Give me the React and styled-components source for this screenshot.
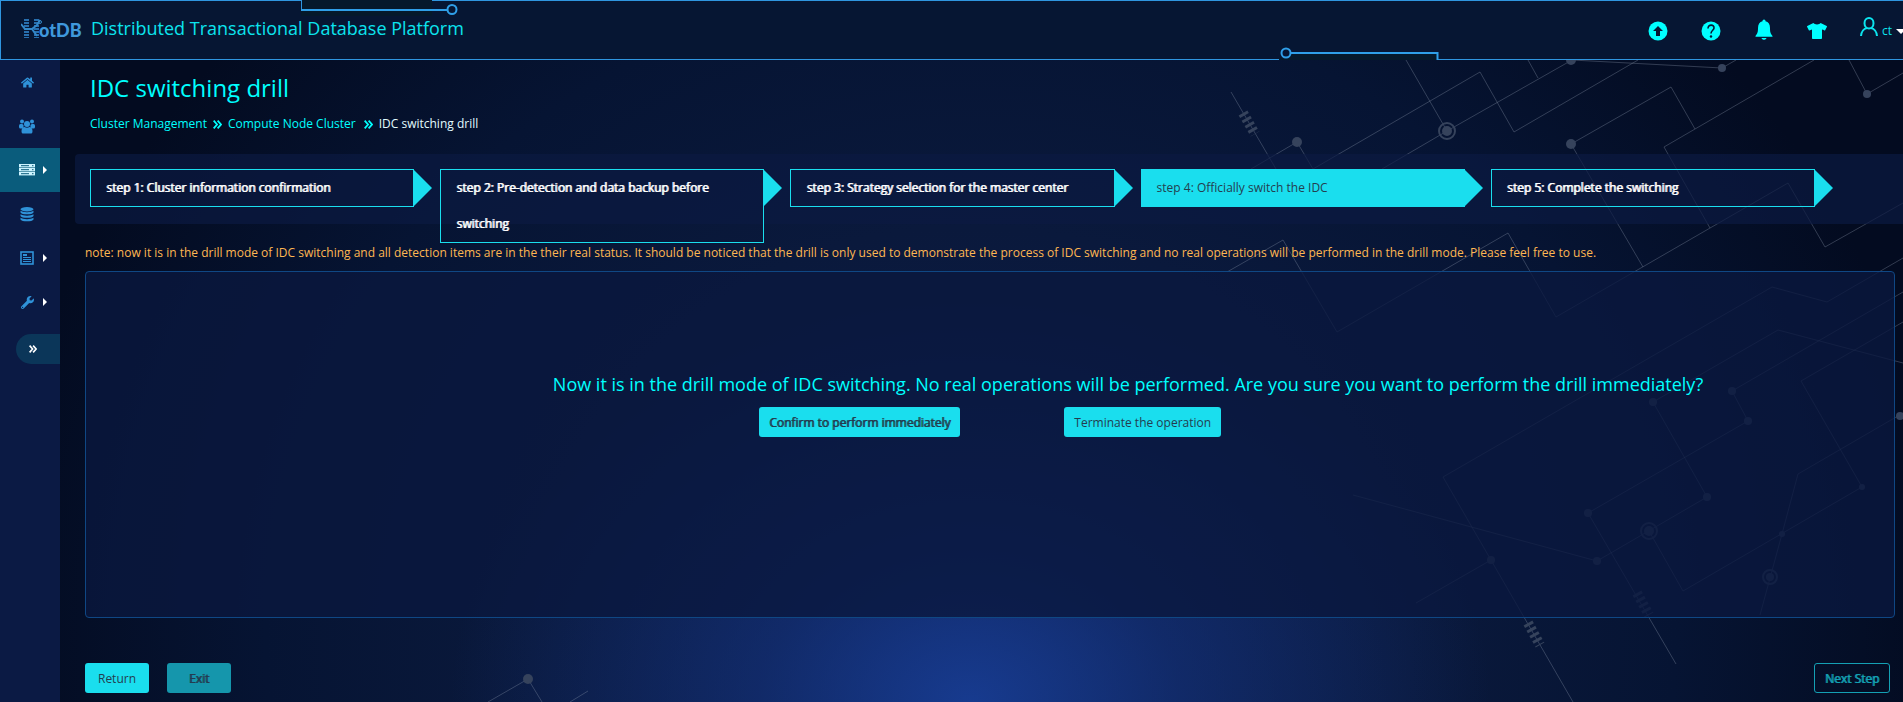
import React from "react";
import styled, { createGlobalStyle, css } from "styled-components";
import { FaTshirt, FaWrench, FaHome } from "react-icons/fa";

const GlobalStyle = createGlobalStyle`
  *, *::before, *::after { box-sizing: border-box; }
  body {
    margin: 0;
    background: #030b20;
    color: #ffffff;
    font-family: "Open Sans", "Noto Sans", sans-serif;
    font-size: 12px;
    line-height: 18px;
  }
  a { text-decoration: none; color: inherit; }
  svg { display: block; }
  h1, p, ol, ul { margin: 0; padding: 0; }
  button { font-family: inherit; cursor: pointer; }
`;

const strongText = css`
  text-shadow: 1px 0 0 currentColor;
`;

const Page = styled.div`
  position: relative;
  display: flex;
  flex-direction: column;
  min-height: 100vh;
  overflow: hidden;
  background:
    radial-gradient(ellipse 520px 400px at 51% 100%, rgba(26, 66, 160, 0.8), rgba(22, 54, 134, 0.55) 40%, rgba(12, 30, 80, 0) 100%),
    radial-gradient(ellipse 980px 900px at 51% 90%, #0c1e4c 0%, #0a193c 45%, #061433 72%, #030b20 100%);
`;

const Circuit = styled.svg`
  position: absolute;
  top: 0;
  right: 0;
  width: 1903px;
  height: 702px;
  fill: none;
  stroke: rgba(142, 152, 174, 0.34);
  stroke-width: 1;

  .node { fill: #36435c; stroke: none; }
  .ring { stroke: #36435c; stroke-width: 2; }
  .coil { stroke: #36435c; stroke-width: 10; stroke-dasharray: 3 3; }
`;

const Header = styled.header`
  position: relative;
  display: flex;
  align-items: center;
  height: 60px;
  padding-left: 20px;
  background: #061633;
  border: 1px solid #2f96e0;
  border-right: 0;
`;

const TopNotch = styled.svg`
  position: absolute;
  top: -1px;
  left: 299px;
`;

const BottomNotch = styled.svg`
  position: absolute;
  bottom: -1px;
  right: 464px;
`;

const Brand = styled.a`
  display: flex;
  align-items: center;
  gap: 9px;
  padding-bottom: 4px;
  color: #0ce4ee;
  font-size: 18px;
  line-height: 26px;
`;

const Tools = styled.nav`
  display: flex;
  align-items: center;
  gap: 33px;
  margin-left: auto;
  padding-top: 2px;
  color: #00ffff;
`;

const Tool = styled.a`
  display: grid;
  place-items: center;
  width: 20px;
  height: 24px;
  padding-bottom: ${(p) => (p.$raised ? 4 : 0)}px;
`;

const Account = styled.a`
  display: flex;
  align-items: center;
  gap: 4px;
  color: #0ce4ee;
`;

const Body = styled.div`
  position: relative;
  display: flex;
  flex: 1;
`;

const Sidebar = styled.nav`
  display: flex;
  flex-direction: column;
  flex: none;
  width: 60px;
  background: #0b1a44;
`;

const SideItem = styled.a`
  display: grid;
  grid-template-columns: 18px 4px;
  align-items: center;
  justify-items: center;
  gap: 7px;
  height: 44px;
  padding-left: 18px;
  color: ${(p) => (p.$active ? "#ccf4ff" : "#2f92d8")};
  background: ${(p) => (p.$active ? "#0a5c7c" : "transparent")};
`;

const Expand = styled.button`
  display: flex;
  align-items: center;
  height: 30px;
  margin: 10px 0 0 16px;
  padding: 0 0 0 13px;
  border: 0;
  border-radius: 15px 0 0 15px;
  background: #0b3659;
  color: #ffffff;
`;

const Main = styled.main`
  flex: 1;
  min-width: 0;
  padding-left: 15px;
`;

const Title = styled.h1`
  padding: 12px 15px 0;
  color: #00ffff;
  font-size: 24px;
  font-weight: 400;
  line-height: 32px;
`;

const Crumbs = styled.nav`
  display: flex;
  align-items: center;
  gap: 6px;
  padding: 11px 15px 21px;
  color: #00ffff;

  svg + a { padding-right: 2px; }
  span { color: #e2fbff; }
`;

const Steps = styled.ol`
  display: grid;
  grid-template-columns: repeat(5, 1fr);
  align-items: start;
  gap: 26px;
  height: 70px;
  padding: 15px 88px 0 15px;
  list-style: none;
  border-radius: 4px 0 0 4px;
  background: rgba(11, 25, 66, 0.7);
`;

const Step = styled.li`
  position: relative;
  padding: 0 40px 0 15px;
  border: 1px solid #1adeee;
  background: ${(p) => (p.$active ? "#1adeee" : "transparent")};
  color: ${(p) => (p.$active ? "#24404f" : "#ffffff")};
  line-height: 36px;
  ${(p) => !p.$active && strongText}

  &::after {
    content: "";
    position: absolute;
    top: -1px;
    left: 100%;
    border-style: solid;
    border-width: 19px 0 19px 19px;
    border-color: transparent transparent transparent #1adeee;
  }
`;

const Note = styled.p`
  padding: 20px 10px 9px;
  color: #ffb752;
`;

const Panel = styled.section`
  min-height: 347px;
  margin: 0 8px 0 10px;
  padding-top: 99px;
  border: 1px solid #0f4784;
  border-radius: 4px;
  background: rgba(10, 24, 62, 0.8);
`;

const Question = styled.p`
  padding-left: 276px;
  color: #00ffff;
  font-size: 18px;
  line-height: 26px;
  text-align: center;
`;

const Choices = styled.div`
  display: flex;
  justify-content: center;
  gap: 104px;
  padding-top: 10px;
`;

const Button = styled.button`
  min-width: 64px;
  height: 30px;
  padding: 1px 9px 0;
  border: 1px solid ${(p) => (p.$kind === "outline" ? "#14a0b4" : "transparent")};
  border-radius: 3px;
  background: ${(p) =>
    p.$kind === "outline" ? "transparent" : p.$kind === "muted" ? "#1596ac" : "#1adeee"};
  color: ${(p) => (p.$kind === "outline" ? "#14a0b4" : "#243c4e")};
  font-size: 12px;
  line-height: 18px;
  ${(p) => p.$bold && strongText}
`;

const Footer = styled.footer`
  display: flex;
  gap: 18px;
  padding: 45px 13px 9px 10px;

  button:last-child {
    min-width: 76px;
    margin-left: auto;
  }
`;

const circuitLines = [
  "1406,60 1447,131",
  "1382,169 1447,131 1572,60 1722,68 1736,60",
  "1528,60 1538,78",
  "1251,169 1297,142 1313,169 1480,72 1514,132 1638,60",
  "1231,92 1276,169",
  "1695,129 1671,87 1571,144 1643,267",
  "1814,60 1664,147 1710,228",
  "1849,60 1867,94 1903,73",
  "1903,203 1825,247 1788,183 1556,317 1508,233 1337,332 1283,240 1227,272",
  "1903,258 1827,302 1772,287 1443,477 1573,702",
  "1491,560 1416,603",
  "1903,292 1732,391 1748,421 1588,513 1676,664",
  "1903,363 1778,330 1653,402 1707,497 1597,561 1353,495",
  "1903,322 1801,381 1862,487 1683,591 1649,531",
  "1903,413 1798,474 1782,534 1760,615",
  "488,702 528,679 542,702",
  "570,702 588,691",
];
const circuitNodes = [
  [1571, 60, 5], [1722, 68, 4], [1867, 94, 4], [1297, 142, 5], [1571, 144, 5], [1447, 131, 5],
  [1653, 402, 4], [1732, 391, 4], [1748, 421, 4], [1588, 513, 4], [1707, 497, 4], [1649, 531, 5],
  [1597, 561, 4], [1782, 534, 3], [1862, 487, 3], [1770, 577, 4], [1491, 560, 4], [1900, 416, 4], [528, 679, 5],
];
const circuitRings = [[1447, 131, 8], [1649, 531, 8], [1770, 577, 7]];
const circuitCoils = ["1243,113 1255,134", "1528,623 1540,645", "1637,593 1649,615"];

const CircuitArt = () => (
  <Circuit viewBox="0 0 1903 702" aria-hidden="true">
    {circuitLines.map((p) => <polyline key={p} points={p} />)}
    {circuitCoils.map((p) => <polyline key={p} points={p} className="coil" />)}
    {circuitRings.map(([x, y, r]) => <circle key={x} cx={x} cy={y} r={r} className="ring" />)}
    {circuitNodes.map(([x, y, r]) => <circle key={`${x}-${y}`} cx={x} cy={y} r={r} className="node" />)}
  </Circuit>
);

const Logo = () => (
  <svg width="61" height="24" viewBox="0 0 61 24" role="img" aria-label="HotDB">
    <path d="M5.500 3v19M15.500 3v19" fill="none" stroke="#286fae" strokeWidth="5" strokeDasharray="2 1" />
    <path d="M0 8l4 5h7l5-4 3-5M11 13l5 7" fill="none" stroke="#3387c8" strokeWidth="2" />
    <circle cx="10.500" cy="7" r="2.500" fill="#061633" />
    <circle cx="19" cy="6" r="1.500" fill="none" stroke="#3387c8" />
    <text x="18" y="21" fill="#3f98dc" fontFamily="Lato, sans-serif" fontWeight="900" fontSize="18">otDB</text>
  </svg>
);

const UpIcon = () => (
  <svg width="20" height="20" viewBox="0 0 20 20">
    <circle cx="10" cy="10" r="9.500" fill="currentColor" />
    <path d="M10 5l5 5h-3v5H8v-5H5z" fill="#061633" />
  </svg>
);

const HelpIcon = () => (
  <svg width="20" height="20" viewBox="0 0 20 20">
    <circle cx="10" cy="10" r="9.500" fill="currentColor" />
    <path d="M7 7.500C7 2.800 13.500 3.200 13 7.200C12.800 9.200 10 9.500 10 12.500" fill="none" stroke="#061633" strokeWidth="1.600" />
    <circle cx="10" cy="15.500" r="1.200" fill="#061633" />
  </svg>
);

const BellIcon = () => (
  <svg width="20" height="24" viewBox="0 0 20 24">
    <path d="M10 0.500c1 0 1.500.7 1.500 1.800C14.500 3 16 5.500 16 9c0 4 .5 5.500 2.500 8v.8h-17V17C3.500 14.500 4 13 4 9c0-3.500 1.500-6 4.500-6.700C8.500 1.200 9 .5 10 .5zM7.500 19h5c-.4 2.400-4.600 2.400-5 0z" fill="currentColor" />
  </svg>
);

const UserIcon = () => (
  <svg width="18" height="28" viewBox="0 0 18 28" fill="none" stroke="currentColor" strokeWidth="2">
    <ellipse cx="9" cy="6.200" rx="4.500" ry="5.200" />
    <path d="M1 19c.3-4.500 3-7.500 6-8M17 19c-.3-4.500-3-7.500-6-8" />
  </svg>
);

const PeopleIcon = () => (
  <svg width="16" height="15" viewBox="0 0 16 15" fill="currentColor">
    <circle cx="3" cy="2.500" r="2" />
    <circle cx="13" cy="2.500" r="2" />
    <rect y="5" width="4.500" height="4.500" rx="1.500" />
    <rect x="11.500" y="5" width="4.500" height="4.500" rx="1.500" />
    <circle cx="8" cy="5" r="3" />
    <path d="M2.500 12c0-2.500 1.500-4 3-4 1.500 1 3.500 1 5 0 1.500 0 3 1.500 3 4 0 2-.5 2.500-2 2.500h-7c-1.500 0-2-.5-2-2.500z" />
  </svg>
);

const ServerIcon = () => (
  <svg width="16" height="12" viewBox="0 0 16 12">
    {[0, 4, 8].map((y) => (
      <g key={y}>
        <rect y={y} width="16" height="3.400" fill="currentColor" />
        <path d={`M2 ${y + 1.7}h8M13 ${y + 1.7}h1.500`} stroke="#0a5c7c" />
      </g>
    ))}
  </svg>
);

const DatabaseIcon = () => (
  <svg width="14" height="15" viewBox="0 0 14 15" fill="currentColor">
    <ellipse cx="7" cy="2.200" rx="6.500" ry="2.200" />
    {[3.8, 7.3, 10.8].map((y) => (
      <path key={y} d={`M.5 ${y}c2 1.900 11 1.900 13 0v1.600c-1 2.500-12 2.500-13 0z`} />
    ))}
  </svg>
);

const ListIcon = () => (
  <svg width="14" height="14" viewBox="0 0 14 14" fill="none" stroke="currentColor">
    <rect x="1" y="1" width="12" height="12" strokeWidth="1.600" />
    <path d="M3 6.500h8M3 8.500h8M3 10.500h8" />
    <path d="M3 4h4" strokeWidth="2" />
  </svg>
);

const Chevrons = ({ size = 8 }) => (
  <svg width={size} height={size} viewBox="0 0 8 8" fill="none" stroke="currentColor" strokeWidth="1.600" aria-hidden="true">
    <path d="M.6.600L3.600 4L.6 7.400M4.100.600L7.100 4L4.100 7.400" />
  </svg>
);

const Pointer = () => (
  <svg width="4" height="8" viewBox="0 0 4 8" aria-hidden="true">
    <path d="M0 0l4 4-4 4z" fill="#ffffff" />
  </svg>
);

const tools = [
  { label: "Upgrade", icon: <UpIcon /> },
  { label: "Help", icon: <HelpIcon /> },
  { label: "Notices", icon: <BellIcon />, raised: true },
  { label: "Theme", icon: <FaTshirt size={20} /> },
];

const menu = [
  { label: "Home", icon: <FaHome size={13} /> },
  { label: "Users", icon: <PeopleIcon /> },
  { label: "Cluster Management", icon: <ServerIcon />, more: true, active: true },
  { label: "Databases", icon: <DatabaseIcon /> },
  { label: "Reports", icon: <ListIcon />, more: true },
  { label: "Tools", icon: <FaWrench size={13} />, more: true },
];

const steps = [
  "step 1: Cluster information confirmation",
  "step 2: Pre-detection and data backup before switching",
  "step 3: Strategy selection for the master center",
  "step 4: Officially switch the IDC",
  "step 5: Complete the switching",
];

export default function App() {
  return (
    <Page>
      <GlobalStyle />
      <CircuitArt />
      <Header>
        <TopNotch width="160" height="18" viewBox="0 0 160 18" aria-hidden="true">
          <rect x="1" width="131" height="16" fill="#05192b" />
          <path d="M1.500 0v9" stroke="#2f96e0" />
          <path d="M1 10h146" stroke="#2f9fe8" strokeWidth="2" />
          <circle cx="152" cy="9.500" r="4.500" fill="#061633" stroke="#2f9fe8" strokeWidth="2" />
        </TopNotch>
        <BottomNotch width="160" height="14" viewBox="0 0 160 14" aria-hidden="true">
          <path d="M0 14v-2h159v2z" fill="#05192b" />
          <rect x="8" y="8" width="151" height="6" fill="#05192b" />
          <path d="M12 7h146.500v7" fill="none" stroke="#2f9fe8" strokeWidth="2" />
          <circle cx="7" cy="7" r="4.500" fill="#061633" stroke="#2f9fe8" strokeWidth="2" />
        </BottomNotch>
        <Brand href="#home">
          <Logo />
          Distributed Transactional Database Platform
        </Brand>
        <Tools aria-label="Tools">
          {tools.map((t) => (
            <Tool key={t.label} href="#tool" aria-label={t.label} $raised={t.raised}>{t.icon}</Tool>
          ))}
          <Account href="#account">
            <UserIcon />
            ct
            <svg width="7" height="5" viewBox="0 0 7 5" aria-hidden="true">
              <path d="M0 0h10l-5 5z" fill="#ffffff" />
            </svg>
          </Account>
        </Tools>
      </Header>
      <Body>
        <Sidebar aria-label="Sections">
          {menu.map((m) => (
            <SideItem key={m.label} href="#section" aria-label={m.label} $active={m.active}>
              {m.icon}
              {m.more && <Pointer />}
            </SideItem>
          ))}
          <Expand aria-label="Expand menu"><Chevrons /></Expand>
        </Sidebar>
        <Main>
          <Title>IDC switching drill</Title>
          <Crumbs aria-label="Breadcrumb">
            <a href="#cluster">Cluster Management</a>
            <Chevrons size={9} />
            <a href="#node">Compute Node Cluster</a>
            <Chevrons size={9} />
            <span>IDC switching drill</span>
          </Crumbs>
          <Steps>
            {steps.map((s, i) => <Step key={s} $active={i === 3}>{s}</Step>)}
          </Steps>
          <Note>
            note: now it is in the drill mode of IDC switching and all detection items are in the their real status. It should be noticed that the drill is only used to demonstrate the process of IDC switching and no real operations will be performed in the drill mode. Please feel free to use.
          </Note>
          <Panel>
            <Question>
              Now it is in the drill mode of IDC switching. No real operations will be performed. Are you sure you want to perform the drill immediately?
            </Question>
            <Choices>
              <Button $bold>Confirm to perform immediately</Button>
              <Button>Terminate the operation</Button>
            </Choices>
          </Panel>
          <Footer>
            <Button>Return</Button>
            <Button $kind="muted" $bold>Exit</Button>
            <Button $kind="outline" $bold>Next Step</Button>
          </Footer>
        </Main>
      </Body>
    </Page>
  );
}
